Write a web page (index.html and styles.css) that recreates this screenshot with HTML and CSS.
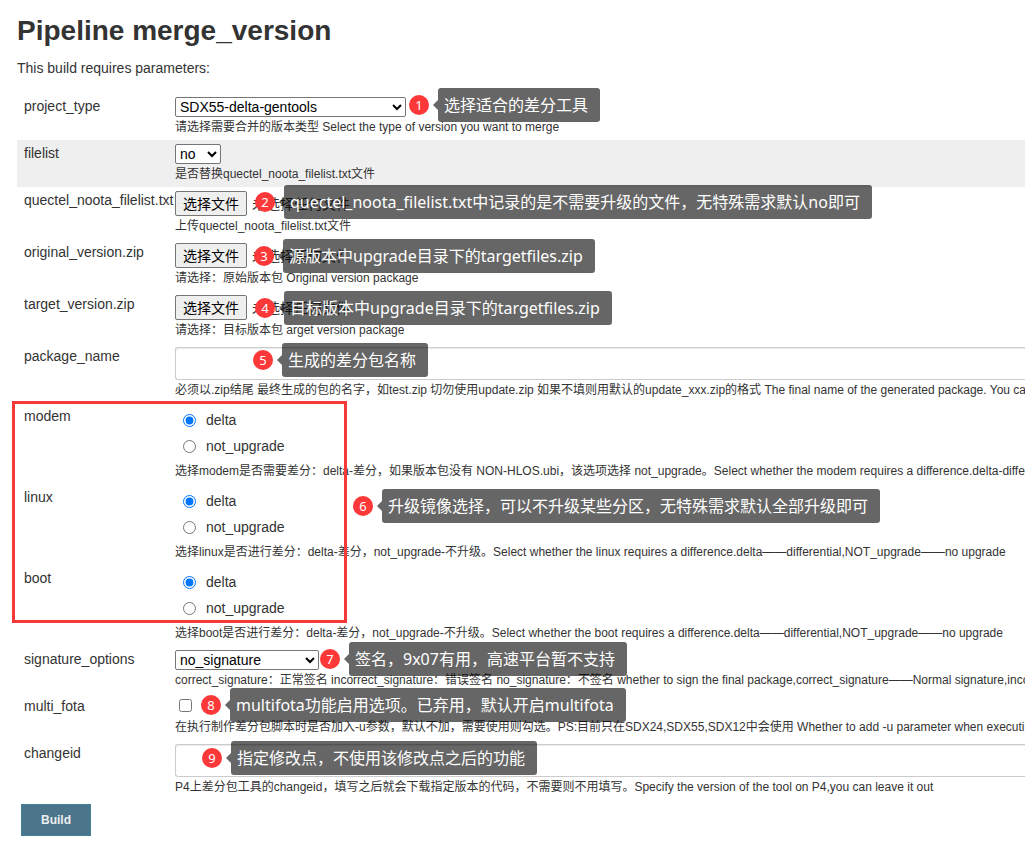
FILE: index.html
```html
<!DOCTYPE html>
<html lang="zh-CN">
<head>
<meta charset="utf-8">
<title>Pipeline merge_version</title>
<link rel="stylesheet" href="styles.css">
</head>
<body>
<main class="page">
  <h1 class="title">Pipeline merge_version</h1>
  <p class="intro">This build requires parameters:</p>
  <form class="params">
    <div class="row">
      <label class="name" for="project_type">project_type</label>
      <div class="field">
        <select class="select select-wide" id="project_type"><option>SDX55-delta-gentools</option></select>
        <div class="hint">请选择需要合并的版本类型 Select the type of version you want to merge</div>
      </div>
      <div class="note note-1"><span class="badge">1</span><span class="bubble">选择适合的差分工具</span></div>
    </div>
    <div class="row row-shaded">
      <label class="name" for="filelist">filelist</label>
      <div class="field">
        <select class="select select-small" id="filelist"><option>no</option></select>
        <div class="hint">是否替换quectel_noota_filelist.txt文件</div>
      </div>
    </div>
    <div class="row">
      <span class="name" id="noota-name">quectel_noota_filelist.txt</span>
      <div class="field">
        <div class="file"><button class="file-button" type="button" aria-describedby="noota-name">选择文件</button><span>未选择任何文件</span></div>
        <div class="hint">上传quectel_noota_filelist.txt文件</div>
      </div>
      <div class="note note-2"><span class="badge">2</span><span class="bubble">quectel_noota_filelist.txt中记录的是不需要升级的文件，无特殊需求默认no即可</span></div>
    </div>
    <div class="row">
      <span class="name" id="original-name">original_version.zip</span>
      <div class="field">
        <div class="file"><button class="file-button" type="button" aria-describedby="original-name">选择文件</button><span>未选择任何文件</span></div>
        <div class="hint">请选择：原始版本包 Original version package</div>
      </div>
      <div class="note note-3"><span class="badge">3</span><span class="bubble">源版本中upgrade目录下的targetfiles.zip</span></div>
    </div>
    <div class="row">
      <span class="name" id="target-name">target_version.zip</span>
      <div class="field">
        <div class="file"><button class="file-button" type="button" aria-describedby="target-name">选择文件</button><span>未选择任何文件</span></div>
        <div class="hint">请选择：目标版本包 arget version package</div>
      </div>
      <div class="note note-4"><span class="badge">4</span><span class="bubble">目标版本中upgrade目录下的targetfiles.zip</span></div>
    </div>
    <div class="row">
      <label class="name" for="package_name">package_name</label>
      <div class="field">
        <input class="text" type="text" id="package_name">
        <div class="hint">必须以.zip结尾 最终生成的包的名字，如test.zip 切勿使用update.zip 如果不填则用默认的update_xxx.zip的格式 The final name of the generated package. You can</div>
      </div>
      <div class="note note-5"><span class="badge">5</span><span class="bubble">生成的差分包名称</span></div>
    </div>
    <div class="images">
      <div class="row" role="radiogroup" aria-labelledby="modem-name">
        <span class="name" id="modem-name">modem</span>
        <div class="field">
          <div class="choices">
            <label class="choice"><input class="radio" type="radio" name="modem" checked>delta</label>
            <label class="choice"><input class="radio" type="radio" name="modem">not_upgrade</label>
          </div>
          <div class="hint">选择modem是否需要差分：delta-差分，如果版本包没有 NON-HLOS.ubi，该选项选择 not_upgrade。Select whether the modem requires a difference.delta-differential</div>
        </div>
      </div>
      <div class="row" role="radiogroup" aria-labelledby="linux-name">
        <span class="name" id="linux-name">linux</span>
        <div class="field">
          <div class="choices">
            <label class="choice"><input class="radio" type="radio" name="linux" checked>delta</label>
            <label class="choice"><input class="radio" type="radio" name="linux">not_upgrade</label>
          </div>
          <div class="hint">选择linux是否进行差分：delta-差分，not_upgrade-不升级。Select whether the linux requires a difference.delta——differential,NOT_upgrade——no upgrade</div>
        </div>
        <div class="note note-6"><span class="badge">6</span><span class="bubble">升级镜像选择，可以不升级某些分区，无特殊需求默认全部升级即可</span></div>
      </div>
      <div class="row" role="radiogroup" aria-labelledby="boot-name">
        <span class="name" id="boot-name">boot</span>
        <div class="field">
          <div class="choices">
            <label class="choice"><input class="radio" type="radio" name="boot" checked>delta</label>
            <label class="choice"><input class="radio" type="radio" name="boot">not_upgrade</label>
          </div>
          <div class="hint">选择boot是否进行差分：delta-差分，not_upgrade-不升级。Select whether the boot requires a difference.delta——differential,NOT_upgrade——no upgrade</div>
        </div>
      </div>
      <div class="frame"></div>
    </div>
    <div class="row">
      <label class="name" for="signature_options">signature_options</label>
      <div class="field">
        <select class="select select-medium" id="signature_options"><option>no_signature</option></select>
        <div class="hint">correct_signature：正常签名 incorrect_signature：错误签名 no_signature：不签名 whether to sign the final package,correct_signature——Normal signature,incorrect</div>
      </div>
      <div class="note note-7"><span class="badge">7</span><span class="bubble">签名，9x07有用，高速平台暂不支持</span></div>
    </div>
    <div class="row">
      <label class="name" for="multi_fota">multi_fota</label>
      <div class="field">
        <div class="check"><input class="checkbox" type="checkbox" id="multi_fota"></div>
        <div class="hint">在执行制作差分包脚本时是否加入-u参数，默认不加，需要使用则勾选。PS:目前只在SDX24,SDX55,SDX12中会使用 Whether to add -u parameter when executing</div>
      </div>
      <div class="note note-8"><span class="badge">8</span><span class="bubble">multifota功能启用选项。已弃用，默认开启multifota</span></div>
    </div>
    <div class="row">
      <label class="name" for="changeid">changeid</label>
      <div class="field">
        <input class="text" type="text" id="changeid">
        <div class="hint">P4上差分包工具的changeid，填写之后就会下载指定版本的代码，不需要则不用填写。Specify the version of the tool on P4,you can leave it out</div>
      </div>
      <div class="note note-9"><span class="badge">9</span><span class="bubble">指定修改点，不使用该修改点之后的功能</span></div>
    </div>
    <button class="build" type="button">Build</button>
  </form>
</main>
</body>
</html>
```
FILE: styles.css
```css
* { box-sizing: border-box; }

body {
  margin: 0;
  background: #fff;
  color: #333;
  font: 14px/20px "Liberation Sans", "Noto Sans CJK SC", sans-serif;
}

.page {
  padding: 15px 0 6px 17px;
  overflow: hidden;
}

.title {
  margin: 0;
  font-size: 28px;
  line-height: 32px;
}

.intro { margin: 11px 0 15px; }

.row {
  position: relative;
  display: grid;
  grid-template-columns: 151px minmax(0, 1fr);
  padding: 4px 0 3px 7px;
}

.row-shaded { background: #efefef; }

.name {
  line-height: 18px;
  white-space: nowrap;
}

.field {
  display: flex;
  flex-direction: column;
  align-items: flex-start;
}

.hint {
  font-size: 12px;
  line-height: 20px;
  white-space: nowrap;
}

.select {
  height: 20px;
  padding: 0;
  border: 1px solid #767676;
  border-radius: 2px;
  background: #fff;
  color: #000;
  font: 14px "Liberation Sans", sans-serif;
}

.select-wide { width: 231px; }
.select-medium { width: 144px; }
.select-small { width: 46px; }

.file {
  display: flex;
  align-items: center;
  gap: 5px;
  height: 25px;
}

.file-button {
  height: 25px;
  padding: 0 7px;
  border: 1px solid #767676;
  border-radius: 2px;
  background: #efefef;
  color: #000;
  font: 14px/20px "Liberation Sans", "Noto Sans CJK SC", sans-serif;
}

.text {
  width: 100%;
  height: 33px;
  padding: 6px;
  border: 1px solid #ccc;
  border-right: 0;
  border-radius: 3px 0 0 3px;
  box-shadow: inset 0 1px 1px rgba(0, 0, 0, 0.08);
  font: inherit;
}

.choices { padding: 0 0 2px 8px; }

.choice {
  display: flex;
  align-items: center;
  gap: 10px;
  height: 26px;
}

.radio {
  width: 13px;
  height: 13px;
  margin: 0;
}

.check {
  height: 20px;
  padding: 2px 0 0 4px;
}

.checkbox {
  display: block;
  width: 13px;
  height: 13px;
  margin: 0;
}

.build {
  display: block;
  height: 32px;
  margin: 4px 0 0 4px;
  padding: 0 19px;
  border: 1px solid #43829a;
  background: #4b758b;
  color: #eee;
  font: bold 12px "Liberation Sans", sans-serif;
}

.images { position: relative; }

.frame {
  position: absolute;
  top: -2px;
  bottom: 23px;
  left: -5px;
  width: 335px;
  border: 3px solid #f93838;
  pointer-events: none;
}

/* Numbered callouts lying over the form */
.note {
  position: absolute;
  z-index: 1;
  display: flex;
  align-items: center;
  gap: 9px;
  white-space: nowrap;
}

.badge {
  width: 20px;
  height: 20px;
  border-radius: 50%;
  background: #fc3838;
  color: #fff;
  font: 13px/20px "Noto Sans", sans-serif;
  text-align: center;
}

.bubble {
  position: relative;
  height: 34px;
  padding: 0 12px 0 6px;
  border-radius: 3px;
  background: rgba(0, 0, 0, 0.6);
  color: #fff;
  font: 16px/34px "Noto Sans", "Noto Sans CJK SC", sans-serif;
}

.bubble::before {
  content: "";
  position: absolute;
  top: 12px;
  right: 100%;
  border: solid transparent;
  border-width: 5px 5px 5px 0;
  border-right-color: rgba(0, 0, 0, 0.6);
}

.note-1 { top: -5px; left: 392px; }
.note-2 { top: -2px; left: 238px; }
.note-3 { top: 0; left: 237px; }
.note-4 { top: 0; left: 238px; }
.note-5 { top: 0; left: 236px; }
.note-6 { top: 5px; left: 336px; }
.note-7 { top: -4px; left: 303px; }
.note-8 { top: -5px; left: 184px; }
.note-9 { top: 1px; left: 185px; }
```
